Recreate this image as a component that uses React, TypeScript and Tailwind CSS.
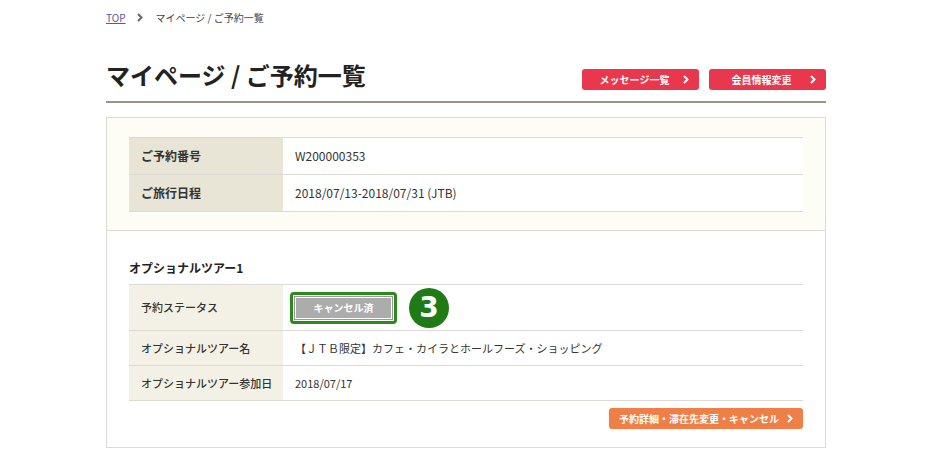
import React from 'react';

const font = { fontFamily: '"Noto Sans CJK JP", "Noto Sans", sans-serif' };

const Chevron: React.FC<{ color?: string; className?: string }> = ({ color = '#fff', className = '' }) => (
  <svg width="6" height="9" viewBox="0 0 6 9" className={className}>
    <polyline points="1,1 4.5,4.5 1,8" fill="none" stroke={color} strokeWidth="2" />
  </svg>
);

const RedButton: React.FC<{ label: string }> = ({ label }) => (
  <button className="relative flex h-[21px] w-[117px] items-center justify-center rounded-[3px] bg-[#e9374e] text-[10px] font-bold text-white">
    <span className="mr-[12px]">{label}</span>
    <Chevron className="absolute right-[10px] top-[6px]" />
  </button>
);

const App: React.FC = () => {
  return (
    <div className="min-h-[465px] w-[940px] bg-white text-[#333]" style={font}>
      <div className="ml-[106px] w-[720px]">
        {/* breadcrumb */}
        <div className="flex h-[36px] items-center gap-[10px] pb-[1px] text-[10px]">
          <a href="#" className="text-[#5b559c] underline">TOP</a>
          <Chevron color="#666" className="mx-[2px]" />
          <span className="text-[#444]">マイページ / ご予約一覧</span>
        </div>

        {/* title */}
        <div className="mt-[23px] flex items-center justify-between border-b-[2px] border-[#9b938b] pb-[10px]">
          <h1 className="text-[24px] font-bold leading-[32px] text-[#222]">マイページ / ご予約一覧</h1>
          <div className="mt-[8px] flex gap-[10px]">
            <RedButton label="メッセージ一覧" />
            <RedButton label="会員情報変更" />
          </div>
        </div>

        {/* main box */}
        <div className="mt-[14px] border border-[#dddbd3]">
          <div className="border-b border-[#dddbd3] bg-[#fdfcf5] px-[22px] pb-[18px] pt-[19px]">
            <table className="w-full border-collapse text-[12px]">
              <tbody>
                <tr className="h-[37px] border-y border-[#dcdad2]">
                  <th className="w-[154px] bg-[#e9e5d6] pl-[12px] text-left font-bold">ご予約番号</th>
                  <td className="bg-white pl-[12px]">W200000353</td>
                </tr>
                <tr className="h-[37px] border-b border-[#dcdad2]">
                  <th className="bg-[#e9e5d6] pl-[12px] text-left font-bold">ご旅行日程</th>
                  <td className="bg-white pl-[12px]">2018/07/13-2018/07/31 (JTB)</td>
                </tr>
              </tbody>
            </table>
          </div>

          <div className="bg-white px-[22px] pb-[18px] pt-[29px]">
            <h2 className="text-[12px] font-bold leading-[16px] text-[#222]">オプショナルツアー1</h2>
            <table className="mt-[8px] w-full border-collapse text-[11px]">
              <tbody>
                <tr className="h-[46px] border-y border-[#dcdad2]">
                  <th className="w-[154px] bg-[#f3f1e6] pl-[12px] text-left font-medium">予約ステータス</th>
                  <td className="pl-[7px]">
                    <div className="flex items-center">
                      <div className="rounded-[4px] border-[3px] border-[#2b8a1c] p-[2px]">
                        <div className="flex h-[22px] w-[97px] items-center justify-center border border-white bg-[#acacac] text-[10px] font-bold text-white outline outline-1 outline-[#999]">
                          キャンセル済
                        </div>
                      </div>
                      <div className="ml-[12px] flex h-[40px] w-[40px] items-center justify-center rounded-full bg-[#1f7b15] text-[28px] font-black leading-none text-white" style={{ fontFamily: '"DejaVu Sans", sans-serif' }}>
                        3
                      </div>
                    </div>
                  </td>
                </tr>
                <tr className="h-[35px] border-b border-[#dcdad2]">
                  <th className="bg-[#f3f1e6] pl-[12px] text-left font-medium">オプショナルツアー名</th>
                  <td className="pl-[12px]">【ＪＴＢ限定】カフェ・カイラとホールフーズ・ショッピング</td>
                </tr>
                <tr className="h-[35px] border-b border-[#dcdad2]">
                  <th className="bg-[#f3f1e6] pl-[12px] text-left font-medium">オプショナルツアー参加日</th>
                  <td className="pl-[12px]">2018/07/17</td>
                </tr>
              </tbody>
            </table>
            <div className="mt-[7px] flex justify-end">
              <button className="relative flex h-[21px] w-[194px] items-center rounded-[3px] bg-[#ef7f46] pl-[10px] text-[10px] font-bold text-white">
                予約詳細・滞在先変更・キャンセル
                <Chevron className="absolute right-[10px] top-[6px]" />
              </button>
            </div>
          </div>
        </div>
      </div>
    </div>
  );
};

export default App;
